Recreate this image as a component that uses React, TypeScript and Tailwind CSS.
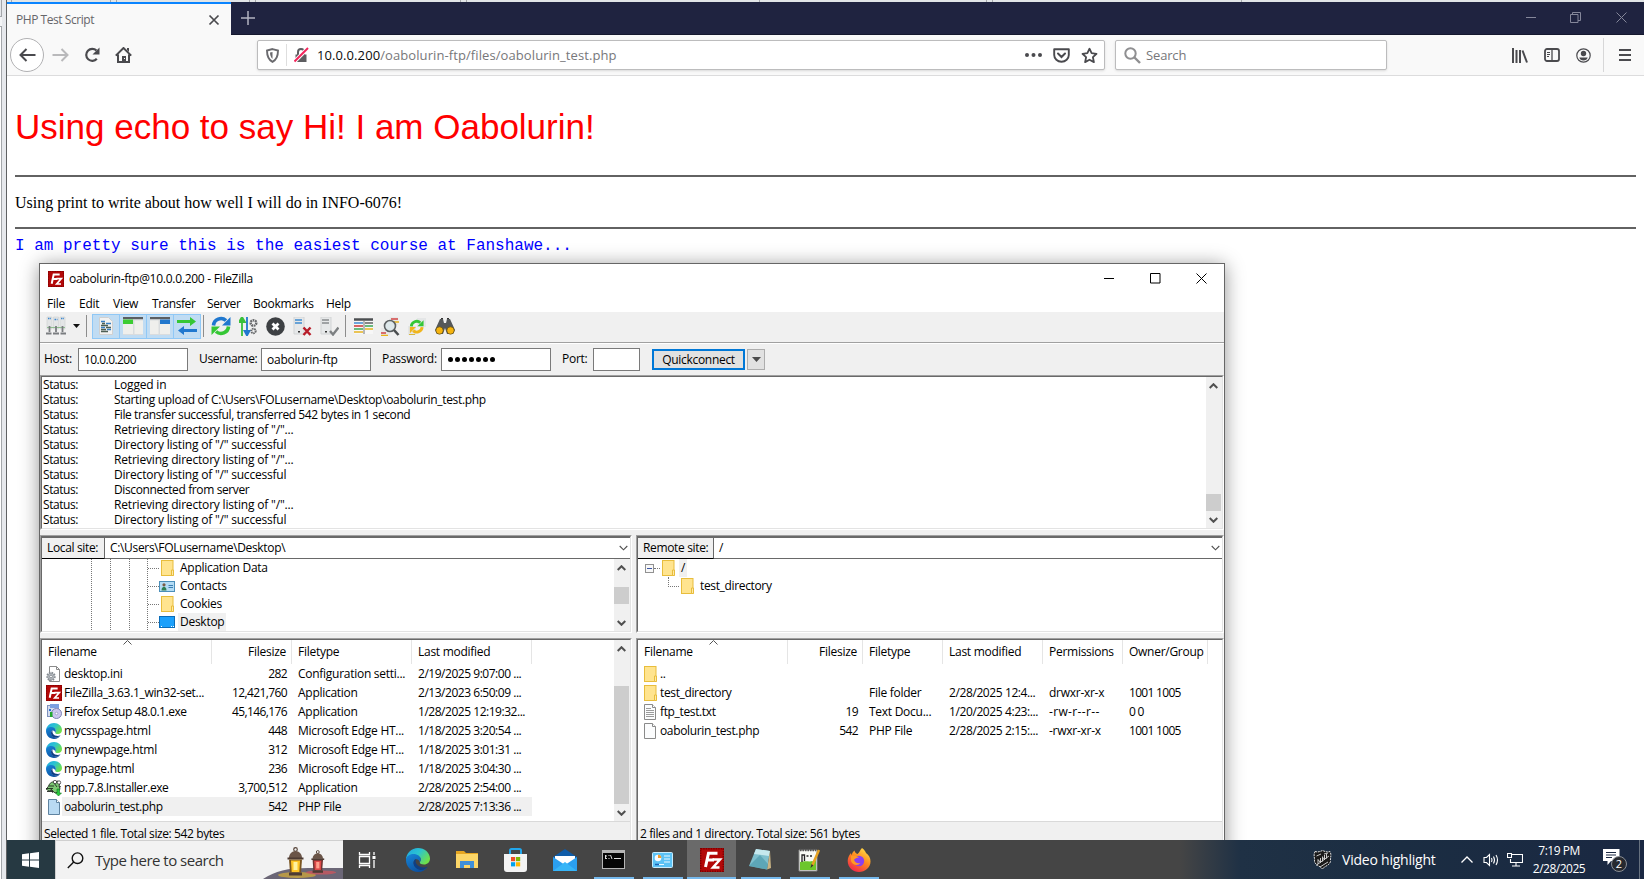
import React from "react";

type P = { children?: React.ReactNode; className?: string };

/* ---------- small shared icons ---------- */
const Folder = () => (
  <svg width="13" height="16" viewBox="0 0 13 16" className="shrink-0">
    <rect x="0.5" y="0.5" width="11.5" height="15" fill="#ffe48f" stroke="#e8bd3c" />
    <path d="M10.500 15.500v-5.500h2v5.500z" fill="#ffe9a6" stroke="#e8bd3c" />
  </svg>
);
const Doc = ({ fill = "#fbfcfd", stroke = "#8a8a8a", lines = false }: { fill?: string; stroke?: string; lines?: boolean }) => (
  <svg width="13" height="16" viewBox="0 0 13 16" className="shrink-0">
    <path d="M.5.5h8l3 3v12H.5z" fill={fill} stroke={stroke} />
    <path d="M8.500.5v3h3" fill="#fff" stroke={stroke} />
    {lines && <path d="M2 4.500h5M2 6.500h8M2 8.500h8M2 10.500h8M2 12.500h8" stroke="#9b9b9b" />}
  </svg>
);
const Fz = ({ s = 16 }: { s?: number }) => (
  <svg width={s} height={s} viewBox="0 0 24 24" className="shrink-0">
    <rect width="24" height="24" fill="#b30808" />
    <rect x=".7" y=".7" width="22.600" height="22.600" fill="none" stroke="#7d0000" strokeWidth="1.400" strokeDasharray="1.500 1" />
    <path d="M5.500 19 8.500 5.200h9M7 12h7" fill="none" stroke="#fff" strokeWidth="3" />
    <path d="M12.500 11.500h7.500l-7 8h6.500" fill="none" stroke="#fff" strokeWidth="2.500" />
  </svg>
);
const Edge = ({ s = 16 }: { s?: number }) => (
  <svg width={s} height={s} viewBox="0 0 24 24" className="shrink-0">
    <defs>
      <linearGradient id="eg1" x1="0" y1="0" x2="1" y2=".6">
        <stop offset="0" stopColor="#1fa4e0" />
        <stop offset=".5" stopColor="#2bc3d2" />
        <stop offset="1" stopColor="#6fe04a" />
      </linearGradient>
      <linearGradient id="eg2" x1="0" y1="0" x2=".6" y2="1">
        <stop offset="0" stopColor="#1787d8" />
        <stop offset="1" stopColor="#0c4f9f" />
      </linearGradient>
    </defs>
    <path d="M0 12C0 5 5.500 0 12 0s12 4.800 12 10.500c0 3.800-2.700 6-6 6-2.600 0-4.200-1-4.200-2 0-.8 1-1.200 1-3 0-2-2-3.500-4.800-3.500C5 8 0 10 0 12z" fill="url(#eg1)" />
    <path d="M0 12c0-3.500 3.500-6 7.500-6 4 0 7.300 2.400 7.300 5.500 0 1.800-1 2.200-1 3 0-2-2.500-4.200-4.800-3C6 13.500 8 20 13.500 21.500c3.500 1 7-1 8.500-3C20 22 16.300 24 12 24 5.300 24 0 18.600 0 12z" fill="url(#eg2)" />
    <path d="M9 11.500c-3.200 3.200-1 9 4.500 10.300 3.500.8 6.800-1.300 8.200-3.300-4 2-9.200.5-11.200-2.500-1.300-2-1-3.700-.2-4.600z" fill="#0f3f84" />
  </svg>
);
const Contact = () => (
  <svg width="16" height="11" viewBox="0 0 16 11" className="shrink-0">
    <rect x=".5" y=".5" width="15" height="10" fill="#b4dcf5" stroke="#4b8fba" />
    <circle cx="5" cy="3.800" r="1.600" fill="#7a5a45" />
    <path d="M2.500 9.500c0-5 5-5 5 0z" fill="#2f7f55" />
    <path d="M9.500 4.500h4.500M9.500 6.500h4.500" stroke="#3c7fb3" />
  </svg>
);
const DesktopI = () => (
  <svg width="16" height="12" viewBox="0 0 16 12" className="shrink-0">
    <rect x=".5" y=".5" width="15" height="11" fill="#1ba0fb" stroke="#0a6cb8" />
    <path d="M2 10.500h1M12 10.500h1M14 10.500h1" stroke="#fff" />
  </svg>
);
const Gear = () => (
  <svg width="16" height="16" viewBox="0 0 16 16" className="shrink-0">
    <path d="M3.500.5h7l3 3v12h-10z" fill="#fff" stroke="#8a8a8a" />
    <path d="M10.500.5v3h3" fill="none" stroke="#8a8a8a" />
    <circle cx="5" cy="10.500" r="3.700" fill="#b8bdc2" stroke="#858b91" strokeWidth="2" strokeDasharray="1.500 1" />
    <circle cx="5" cy="10.500" r="1.400" fill="#fff" stroke="#858b91" />
  </svg>
);
const Setup = () => (
  <svg width="16" height="16" viewBox="0 0 16 16" className="shrink-0">
    <rect x="1.500" y="1.500" width="11" height="11" fill="#d4dced" stroke="#7e91bd" />
    <rect x="4" y="0" width="9" height="4" fill="#7b9fe0" />
    <circle cx="10.500" cy="9.500" r="5" fill="#cbc6ee" stroke="#7d84b5" />
    <circle cx="10.500" cy="9.500" r="1.300" fill="#fff" stroke="#7d84b5" strokeWidth=".6" />
    <path d="M3 5h2v2H3z" fill="#2a6fd2" />
    <rect x="4" y="8" width="2.500" height="5" fill="#25a832" />
  </svg>
);
const Npp = () => (
  <svg width="16" height="16" viewBox="0 0 16 16" className="shrink-0">
    <path d="M3 5c1.500-3 4-3.500 6-3l3-1 2 2-1 3 1 3-2 3-3 1-3-3-3 1-3-2 2-2z" fill="#7cc873" stroke="#2d3a2b" strokeWidth=".9" />
    <path d="M0 8.500h7M1 11.500h6M8 3l3 4M3 6h5M5 9l2 4M13 6l2 1" stroke="#202720" strokeWidth=".9" />
    <circle cx="9" cy="2" r="1.700" fill="#fff" stroke="#222" strokeWidth=".7" />
    <circle cx="13" cy="2.500" r="1.700" fill="#fff" stroke="#222" strokeWidth=".7" />
    <path d="M11 9h2.500v4h2l-3 3-3-3H11z" fill="#25c93c" stroke="#167522" strokeWidth=".6" />
  </svg>
);
const Chev = ({ d = "down", thin = false }: { d?: "up" | "down"; thin?: boolean }) => (
  <svg width="9" height="6" viewBox="0 0 9 6" className="shrink-0">
    <path d={d === "up" ? "M.7 5l3.800-3.800L8.300 5" : "M.7 1l3.800 3.800L8.300 1"} fill="none" stroke="#505050" strokeWidth={thin ? 1.100 : 2} />
  </svg>
);

/* ---------- browser ---------- */
const fx = "#4a4a4e";
const TabBar = () => (
  <div className="flex h-[33px] shrink-0 border-b border-[#15182e] bg-[#1f2340]">
    <div className="flex h-[33px] w-[224px] shrink-0 items-center justify-between border-t-2 border-[#0a84ff] bg-[#f9f9f9] pr-[11px] pl-[9px]">
      <span className="text-[12px] tracking-[-0.45px] text-[#66666a]">PHP Test Script</span>
      <svg width="12" height="12" viewBox="0 0 12 12" className="mt-[1px]"><path d="M1.500 1.500l9 9M10.500 1.500l-9 9" stroke={fx} strokeWidth="1.700" /></svg>
    </div>
    <svg width="14" height="14" viewBox="0 0 14 14" className="mt-[9px] ml-[10px]"><path d="M7 0v14M0 7h14" stroke="#b3b4c0" strokeWidth="1.500" /></svg>
    <div className="ml-auto flex items-start gap-[33px] pt-[10px] pr-[17px]">
      <svg width="11" height="11" viewBox="0 0 11 11"><path d="M0 5.500h10" stroke="#85879a" /></svg>
      <svg width="12" height="11" viewBox="0 0 12 11"><path d="M.5 2.500h7.500v8H.5zM2.500 2.500v-2h8v8H8" fill="none" stroke="#85879a" /></svg>
      <svg width="11" height="11" viewBox="0 0 11 11" className="ml-px"><path d="M.5.5l10 10M10.500.5l-10 10" stroke="#85879a" /></svg>
    </div>
  </div>
);

const NavBar = () => (
  <div className="flex h-[41px] shrink-0 items-center border-b border-[#dcdcdd] bg-[#f9f9f9] pl-[3px]">
    <div className="flex h-[34px] w-[34px] items-center justify-center rounded-full border border-[#b1b1b3] bg-white">
      <svg width="17" height="14" viewBox="0 0 17 14"><path d="M16.500 7H1.500M7.500 1L1.500 7l6 6" fill="none" stroke={fx} strokeWidth="2" /></svg>
    </div>
    <svg width="17" height="14" viewBox="0 0 17 14" className="ml-[8px]"><path d="M.5 7h15M9.500 1l6 6-6 6" fill="none" stroke="#b9b9bb" strokeWidth="2" /></svg>
    <svg width="17" height="16" viewBox="0 0 17 16" className="ml-[15px]">
      <path d="M12.800 11.700A6 6 0 1 1 12.500 3.600" fill="none" stroke={fx} strokeWidth="2.200" />
      <path d="M15.500.5v7h-7z" fill={fx} />
    </svg>
    <svg width="17" height="17" viewBox="0 0 17 17" className="ml-[14px]">
      <path d="M.8 8.600L8.500 1l7.700 7.600M3 7.500V15h11V7.500" fill="none" stroke={fx} strokeWidth="2" />
      <path d="M7 14V9h4v5z" fill={fx} /><path d="M12 1h2v4l-2-2z" fill={fx} /><path d="M9 11h1v1H9z" fill="#fff" />
    </svg>
    <div className="ml-[125px] flex h-[30px] w-[848px] items-center rounded-[2px] border border-[#bcbcbd] bg-white pl-[8px] shadow-sm">
      <svg width="13" height="15" viewBox="0 0 13 15"><path d="M6.500 1.100L12 2.500c0 5-1 9-5.500 11.400C2 11.500 1 7.500 1 2.500z" fill="none" stroke="#6a6a6e" strokeWidth="1.900" /><path d="M6.500 4v7C4.500 9 4 7 4 4.600z" fill="#6a6a6e" /></svg>
      <div className="mr-[7px] ml-[7px] h-[22px] w-px bg-[#dedede]" />
      <svg width="15" height="16" viewBox="0 0 15 16"><path d="M1.500 7.500h11V15h-11z" fill="#5d5d60" /><path d="M4 8V5a3 3 0 0 1 6 0v3" fill="none" stroke="#5d5d60" strokeWidth="2" /><path d="M.5 14.500L14 1" stroke="#fff" strokeWidth="4" /><path d="M.5 14.500L14 1" stroke="#f2255c" strokeWidth="2" /></svg>
      <span className="ml-[8px] pt-[2px] text-[13px] tracking-[0.09px] text-[#77777a]"><span className="text-[#0c0c0d]">10.0.0.200</span>/oabolurin-ftp/files/oabolurin_test.php</span>
      <div className="ml-auto flex items-center gap-[11px] pr-[6px]">
        <svg width="17" height="4" viewBox="0 0 17 4"><circle cx="2" cy="2" r="2" fill={fx} /><circle cx="8.500" cy="2" r="2" fill={fx} /><circle cx="15" cy="2" r="2" fill={fx} /></svg>
        <svg width="17" height="15" viewBox="0 0 17 15"><path d="M1.200 1.200h14.600V7a7.300 6.800 0 0 1-14.600 0z" fill="none" stroke={fx} strokeWidth="1.900" strokeLinejoin="round" /><path d="M5 5.500L8.500 9 12 5.500" fill="none" stroke={fx} strokeWidth="2" strokeLinecap="round" /></svg>
        <svg width="17" height="17" viewBox="0 0 17 17"><path d="M8.500 1.700l2.100 4.500 4.900.6-3.600 3.400 1 4.900-4.400-2.400-4.400 2.400 1-4.900L1.500 6.800l4.900-.6z" fill="none" stroke={fx} strokeWidth="1.800" strokeLinejoin="round" /></svg>
      </div>
    </div>
    <div className="ml-[10px] flex h-[30px] w-[272px] items-center rounded-[2px] border border-[#bcbcbd] bg-white pl-[8px] shadow-sm">
      <svg width="17" height="17" viewBox="0 0 17 17"><circle cx="6.500" cy="6.500" r="5.200" fill="none" stroke="#8f8f91" strokeWidth="2" /><path d="M10.500 10.500l5.500 5.500" stroke="#8f8f91" strokeWidth="2.400" /></svg>
      <span className="ml-[5px] pt-[2px] text-[13px] tracking-[-0.15px] text-[#77777a]">Search</span>
    </div>
    <div className="ml-auto flex items-center pr-[13px]">
      <svg width="16" height="15" viewBox="0 0 16 15"><path d="M1 0v15M4.500 2v13M8 2v13M10.500 2.500L15 14.500" stroke={fx} strokeWidth="2" /></svg>
      <svg width="16" height="14" viewBox="0 0 16 14" className="ml-[16px]"><rect x="1" y="1" width="14" height="12" rx="2" fill="none" stroke={fx} strokeWidth="1.800" /><path d="M8 1v12" stroke={fx} strokeWidth="1.300" /><path d="M3 4.500h3M3 6.500h3M3 8.500h2" stroke={fx} /></svg>
      <svg width="15" height="15" viewBox="0 0 15 15" className="ml-[16px]"><circle cx="7.500" cy="7.500" r="6.700" fill="none" stroke={fx} strokeWidth="1.200" /><circle cx="7.500" cy="5.500" r="2.700" fill={fx} /><path d="M3.300 9.500h8.400c-.5 2-2 3-4.200 3s-3.700-1-4.200-3z" fill={fx} /></svg>
      <div className="ml-[12px] h-[34px] w-px bg-[#d7d7d8]" />
      <svg width="12" height="12" viewBox="0 0 12 12" className="ml-[15px]"><path d="M0 1h12M0 6h12M0 11h12" stroke={fx} strokeWidth="2" /></svg>
    </div>
  </div>
);

/* ---------- FileZilla ---------- */
const Bar = () => <div className="h-[22px] w-px bg-[#8d8d8d]" />;
const On = ({ children }: P) => (
  <div className="-ml-px flex h-[25px] w-[28px] items-center justify-center border border-[#90c8f6] bg-[#c0dcf3]">{children}</div>
);
const Refresh = ({ s, a, b }: { s: number; a: string; b: string }) => (
  <svg width={s} height={s} viewBox="0 0 20 20">
    <path d="M2.500 9.500A7.500 7.500 0 0 1 15 4.500" fill="none" stroke={a} strokeWidth="3.600" />
    <path d="M19.500 1v8.500H11z" fill={a} />
    <path d="M17.500 10.500A7.500 7.500 0 0 1 5 15.500" fill="none" stroke={b} strokeWidth="3.600" />
    <path d="M.5 19v-8.500H9z" fill={b} />
  </svg>
);

const Toolbar = () => (
  <div className="flex h-[31px] shrink-0 items-center border-b border-[#a0a0a0] bg-[#f0f0f0] pb-[2px] pl-[6px]">
    <svg width="20" height="20" viewBox="0 0 20 20">
      <path d="M1 1h5v12H1zM7.500 1h5v12h-5zM14 1h5v12h-5z" fill="#e3e5e6" stroke="#cdd0d2" strokeWidth=".6" />
      <path d="M2 2.500h3M8.500 3.500h3M15 2.500h3" stroke="#3f88cf" strokeWidth="1.600" strokeDasharray="1.500 .7" />
      <path d="M1 11.500h18" stroke="#8fbf8f" strokeWidth="1" />
      <path d="M3.500 10v6M10 10v6M16.500 10v6M0 17.500h5.500M7 17.500h6M14.500 17.500H20" stroke="#7a7d80" strokeWidth="1.800" />
    </svg>
    <svg width="7" height="4" viewBox="0 0 7 4" className="mr-[6px] ml-[7px]"><path d="M0 0h7L3.500 4z" fill="#111" /></svg>
    <Bar />
    <div className="mr-[2px] ml-[6px] flex">
      <On><svg width="14" height="18" viewBox="0 0 14 18"><path d="M.5.500h9l4 4v13H.5z" fill="#f2f2f2" stroke="#d0d0d0" /><path d="M2 4.500h4M7 6.500h5M2 10.500h4M8 12.500h4" stroke="#397fc2" strokeWidth="1.400" /><path d="M3 6.500h3M2 8.500h7M7 10.500h5M2 14.500h7M2 12.500h5" stroke="#4d5e54" strokeWidth="1.300" /></svg></On>
      <On><svg width="20" height="18" viewBox="0 0 20 18"><path d="M0 0h20v18H0z" fill="#d9dcde" /><path d="M0 1h20" stroke="#5b5e62" strokeWidth="2.400" /><path d="M0 2.500h10V7H0z" fill="#3ccc33" /><path d="M0 7h10v10H0zM11.500 3.500H20V17h-8.500z" fill="#efefec" /></svg></On>
      <On><svg width="20" height="18" viewBox="0 0 20 18"><path d="M0 0h20v18H0z" fill="#d9dcde" /><path d="M0 1h20" stroke="#5b5e62" strokeWidth="2.400" /><path d="M10 2.500h10V7H10z" fill="#2277cc" /><path d="M10 7h10v10H10zM0 3.500h8.500V17H0z" fill="#efefec" /></svg></On>
      <On><svg width="20" height="18" viewBox="0 0 20 18"><path d="M0 3h13V0l6 4.500L13 9V6H0z" fill="#35c735" /><path d="M20 15H7v3l-6-4.500L7 9v3h13z" fill="#2078cf" /></svg></On>
    </div>
    <Bar />
    <div className="ml-[7px] flex items-center gap-[8px]">
      <Refresh s={20} a="#2078cf" b="#35c735" />
      <svg width="19" height="19" viewBox="0 0 19 19"><path d="M3 19V4M0 5h6L3 0z" stroke="#3ac03a" strokeWidth="1.800" fill="#3ac03a" /><path d="M8 0v15M5.500 14h5L8 18.500z" stroke="#2078cf" strokeWidth="1.800" fill="#2078cf" /><circle cx="14.500" cy="6" r="2.800" fill="none" stroke="#67696b" strokeWidth="2.400" strokeDasharray="1.700 .7" /><circle cx="14.500" cy="14" r="2.200" fill="none" stroke="#67696b" strokeWidth="2" strokeDasharray="1.400 .6" /></svg>
      <svg width="19" height="19" viewBox="0 0 19 19"><circle cx="9.500" cy="9.500" r="9.300" fill="#3d4043" /><path d="M6.500 6.500l6 6M12.500 6.500l-6 6" stroke="#fff" strokeWidth="2.800" /></svg>
      <svg width="19" height="19" viewBox="0 0 19 19"><path d="M1 0h10v17H1z" fill="#e6e8e9" stroke="#d2d4d5" /><path d="M2 3h7M2 6h7" stroke="#3f8ad0" strokeWidth="1.500" /><path d="M5 14h2v1.500H5z" fill="#333" /><path d="M10.500 10.500l7 7.500M17.500 10.500l-7 7.500" stroke="#b81d2a" strokeWidth="2.500" /></svg>
      <svg width="19" height="19" viewBox="0 0 19 19"><path d="M1 0h10v17H1z" fill="#e6e8e9" stroke="#d2d4d5" /><path d="M2 3h7M2 6h7" stroke="#888b8d" strokeWidth="1.300" /><path d="M5 14h2v1.500H5z" fill="#333" /><path d="M10 14l3 3.500 5.500-7" fill="none" stroke="#7d8082" strokeWidth="2.400" /></svg>
    </div>
    <div className="ml-[6px]"><Bar /></div>
    <div className="ml-[8px] flex items-center gap-[8px]">
      <svg width="19" height="16" viewBox="0 0 19 16"><path d="M0 0h19v16H0z" fill="#f7f7f7" /><path d="M0 1.500h19" stroke="#4b4e51" strokeWidth="2.500" /><path d="M0 5h9" stroke="#3f8ad0" strokeWidth="1.500" /><path d="M0 8h9" stroke="#cc3333" strokeWidth="1.500" /><path d="M0 11h9M11 8h8" stroke="#3aa655" strokeWidth="1.500" /><path d="M0 14h9M11 11h8" stroke="#e6b422" strokeWidth="1.500" /><path d="M10 2v14" stroke="#777" /><path d="M11 5h8" stroke="#555" strokeWidth="1.400" /></svg>
      <svg width="19" height="19" viewBox="0 0 19 19"><path d="M9 0h8v8H9zM0 11h9v8H0z" fill="#e9e9e9" /><path d="M10 2h7M0 16h5" stroke="#d24545" strokeWidth="1.500" /><path d="M13 5h5M0 18.500h7" stroke="#e8b31a" strokeWidth="1.500" /><circle cx="9" cy="9" r="5.500" fill="#dbe6ea" fillOpacity=".85" stroke="#5c6062" strokeWidth="1.600" /><path d="M13 13l4.500 5" stroke="#4a4d4f" strokeWidth="2.600" /></svg>
      <svg width="19" height="19" viewBox="0 0 19 19"><path d="M9 1h9v9H9zM0 9h8v9H0z" fill="#e4e6e7" /><path d="M1 17.500h6" stroke="#d8b73c" /><g transform="translate(1.500 2.500) scale(.72)"><path d="M2.500 9.500A7.500 7.500 0 0 1 15 4.500" fill="none" stroke="#35c735" strokeWidth="4" /><path d="M19.500 1v8.500H11z" fill="#35c735" /><path d="M17.500 10.500A7.500 7.500 0 0 1 5 15.500" fill="none" stroke="#f0b51c" strokeWidth="4" /><path d="M.5 19v-8.500H9z" fill="#f0b51c" /></g></svg>
      <svg width="20" height="17" viewBox="0 0 20 17"><path d="M5 1h3l1 4h2l1-4h3l5 11-2 4h-6l-2-6-2 6H2l-2-4z" fill="#55585a" /><path d="M6 .5h2M12 .5h2" stroke="#333" /><circle cx="4.500" cy="12.500" r="3.700" fill="#f6b40f" stroke="#5a4a1a" strokeWidth=".7" /><circle cx="15.500" cy="12.500" r="3.700" fill="#f6b40f" stroke="#5a4a1a" strokeWidth=".7" /></svg>
    </div>
  </div>
);

const Box = ({ children, className = "" }: P) => (
  <div className={`flex h-[23px] items-center border border-[#7a7a7a] bg-white pl-[5px] ${className}`}>{children}</div>
);

const Quick = () => (
  <div className="flex h-[32px] shrink-0 items-start border-t border-white bg-[#f0f0f0] pt-[4px] pl-[4px]">
    <div className="flex h-[21px] w-[34px] items-center">Host:</div>
    <Box className="w-[110px]"><span className="pb-px tracking-[-0.55px]">10.0.0.200</span></Box>
    <div className="ml-[11px] flex h-[21px] w-[62px] items-center tracking-[-0.3px]">Username:</div>
    <Box className="w-[110px]"><span className="pb-px tracking-[-0.23px]">oabolurin-ftp</span></Box>
    <div className="ml-[11px] flex h-[21px] w-[59px] items-center">Password:</div>
    <Box className="w-[110px] gap-px">
      {[0, 1, 2, 3, 4, 5, 6].map((i) => <span key={i} className="ml-px h-[5px] w-[5px] rounded-full bg-black" />)}
    </Box>
    <div className="ml-[11px] flex h-[21px] w-[31px] items-center">Port:</div>
    <Box className="w-[47px]" />
    <div className="mt-px ml-[12px] flex h-[21px] w-[93px] items-center justify-center border-2 border-[#0078d7] bg-[#e1e1e1] tracking-[-0.3px]">Quickconnect</div>
    <div className="mt-px ml-[2px] flex h-[21px] w-[18px] items-center justify-center border border-[#adadad] bg-[#e1e1e1]">
      <svg width="9" height="5" viewBox="0 0 9 5"><path d="M0 0h9L4.500 5z" fill="#4a4a4a" /></svg>
    </div>
  </div>
);

const Sunken = ({ children, className = "" }: P) => (
  <div className={`border border-[#a0a0a0] border-r-white border-b-white ${className}`}>
    <div className="flex h-full flex-col overflow-hidden border border-[#696969] border-r-[#e3e3e3] border-b-[#e3e3e3] bg-white">{children}</div>
  </div>
);

const Scroll = ({ before, thumb }: { before: string; thumb: string }) => (
  <div className="-mr-px flex w-[17px] shrink-0 flex-col items-center bg-[#f0f0f0] pr-[2px]">
    <div className="flex h-[17px] items-center"><Chev d="up" /></div>
    <div className={`shrink-0 ${before}`} />
    <div className={`w-full shrink-0 bg-[#cdcdcd] ${thumb}`} />
    <div className="mt-auto flex h-[17px] items-center"><Chev /></div>
  </div>
);

const log: [string, string][] = [
  ["Logged in", "tracking-[-0.2px]"],
  ["Starting upload of C:\\Users\\FOLusername\\Desktop\\oabolurin_test.php", "tracking-[-0.33px]"],
  ["File transfer successful, transferred 542 bytes in 1 second", "tracking-[-0.41px]"],
  ['Retrieving directory listing of "/"...', "tracking-[-0.18px]"],
  ['Directory listing of "/" successful', "tracking-[-0.2px]"],
  ['Retrieving directory listing of "/"...', "tracking-[-0.18px]"],
  ['Directory listing of "/" successful', "tracking-[-0.2px]"],
  ["Disconnected from server", "tracking-[-0.38px]"],
  ['Retrieving directory listing of "/"...', "tracking-[-0.18px]"],
  ['Directory listing of "/" successful', "tracking-[-0.2px]"],
];

const Site = ({ label, path, w }: { label: string; path: string; w: string }) => (
  <div className="flex h-[22px] shrink-0 border-t border-[#696969]">
    <div className={`flex items-center border-r border-b border-black border-r-[#696969] bg-[#f0f0f0] pb-[2px] pl-[5px] tracking-[-0.35px] ${w}`}>{label}</div>
    <div className="flex flex-1 items-center justify-between border-b border-[#696969] pr-[2px] pl-[5px]"><span className="pb-[2px] tracking-[-0.33px]">{path}</span><Chev thin /></div>
  </div>
);

const tree: [string, React.ReactNode][] = [
  ["Application Data", <Folder key="a" />],
  ["Contacts", <Contact key="b" />],
  ["Cookies", <Folder key="c" />],
  ["Desktop", <DesktopI key="d" />],
];

type Cell = React.ReactNode;
const leftCols = ["w-[170px]", "w-[80px]", "w-[120px]", "w-[120px]"];
const rightCols = ["w-[150px]", "w-[75px]", "w-[80px]", "w-[100px]", "w-[80px]", "w-[85px]"];

const Header = ({ cols, names, arrow }: { cols: string[]; names: string[]; arrow: string }) => (
  <div className="relative flex h-[24px] shrink-0">
    <svg width="9" height="5" viewBox="0 0 9 5" className={`absolute top-0 ${arrow}`}><path d="M.5 4.500l4-4 4 4" fill="none" stroke="#555" /></svg>
    {names.map((n, i) => (
      <div key={n} className={`flex shrink-0 items-center border-r border-[#e5e5e5] pb-[2px] pl-[6px] ${i === 1 ? "justify-end pr-[5px]" : ""} ${cols[i]}`}>
        <span>{n}</span>
      </div>
    ))}
  </div>
);

const Row = ({ cols, icon, cells, sel, date, name = "" }: { cols: string[]; icon: Cell; cells: string[]; sel?: boolean; date: string; name?: string }) => (
  <div className="flex h-[19px] shrink-0 items-center">
    {cells.map((c, i) => (
      <div key={i} className={`flex h-full shrink-0 items-center whitespace-nowrap ${cols[i]} ${i === 1 ? "justify-end pr-[5px] tracking-[-0.6px]" : ""} ${i === 3 ? date : ""} ${i === 4 && c.includes("--") ? "tracking-[0.35px]" : ""} ${i === 5 ? "tracking-[-0.7px]" : ""} ${i > 1 ? "pl-[6px]" : ""} ${sel && i > 0 ? "bg-[#f0f0f0]" : ""}`}>
        {i === 0 ? (
          <>
            {icon}
            <div className={`flex h-full flex-1 items-center pl-[2px] ${name} ${sel ? "bg-[#f0f0f0]" : ""}`}>{c}</div>
          </>
        ) : c}
      </div>
    ))}
  </div>
);

const I16 = ({ children }: P) => <div className="ml-[4px] flex w-[16px] shrink-0 justify-center">{children}</div>;
const left: [Cell, string[], string][] = [
  [<Gear />, ["desktop.ini", "282", "Configuration setti...", "2/19/2025 9:07:00 ..."], ""],
  [<Fz />, ["FileZilla_3.63.1_win32-set...", "12,421,760", "Application", "2/13/2023 6:50:09 ..."], "tracking-[-0.32px]"],
  [<Setup />, ["Firefox Setup 48.0.1.exe", "45,146,176", "Application", "1/28/2025 12:19:32..."], "tracking-[-0.46px]"],
  [<Edge />, ["mycsspage.html", "448", "Microsoft Edge HT...", "1/18/2025 3:20:54 ..."], ""],
  [<Edge />, ["mynewpage.html", "312", "Microsoft Edge HT...", "1/18/2025 3:01:31 ..."], ""],
  [<Edge />, ["mypage.html", "236", "Microsoft Edge HT...", "1/18/2025 3:04:30 ..."], ""],
  [<Npp />, ["npp.7.8.Installer.exe", "3,700,512", "Application", "2/28/2025 2:54:00 ..."], "tracking-[-0.42px]"],
  [<Doc fill="#b9daf2" stroke="#5f83a0" />, ["oabolurin_test.php", "542", "PHP File", "2/28/2025 7:13:36 ..."], "tracking-[-0.38px]"],
];
const right: [Cell, string[]][] = [
  [<Folder />, ["..", "", "", "", "", ""]],
  [<Folder />, ["test_directory", "", "File folder", "2/28/2025 12:4...", "drwxr-xr-x", "1001 1005"]],
  [<Doc lines />, ["ftp_test.txt", "19", "Text Docu...", "1/20/2025 4:23:...", "-rw-r--r--", "0 0"]],
  [<Doc />, ["oabolurin_test.php", "542", "PHP File", "2/28/2025 2:15:...", "-rwxr-xr-x", "1001 1005"]],
];

const FileZilla = () => (
  <div className="absolute top-[263px] left-[39px] flex h-[617px] w-[1186px] flex-col border border-[#666] bg-[#f0f0f0] text-[12px] leading-[15px] tracking-[-0.27px] text-black shadow-[0_2px_18px_rgba(0,0,0,0.42)]">
    <div className="flex h-[30px] shrink-0 items-center bg-white pb-px pl-[8px]">
      <Fz />
      <span className="ml-[5px] pb-px">oabolurin-ftp@10.0.0.200 - FileZilla</span>
      <div className="ml-auto flex items-center gap-[35px] pr-[17px] pb-px">
        <svg width="11" height="11" viewBox="0 0 11 11"><path d="M0 5.500h10" stroke="#000" /></svg>
        <svg width="11" height="11" viewBox="0 0 11 11"><path d="M.5.500h9.500v9.500H.5z" fill="none" stroke="#000" /></svg>
        <svg width="11" height="11" viewBox="0 0 11 11"><path d="M.5.500l10 10M10.500.5l-10 10" stroke="#000" /></svg>
      </div>
    </div>
    <div className="flex h-[18px] shrink-0 bg-white pl-[7px] leading-[20px]">
      <span className="w-[32px]">File</span><span className="w-[34px]">Edit</span><span className="w-[39px]">View</span><span className="w-[55px] tracking-[-0.45px]">Transfer</span><span className="w-[46px] tracking-[-0.4px]">Server</span><span className="w-[73px]">Bookmarks</span><span>Help</span>
    </div>
    <Toolbar />
    <Quick />
    <Sunken className="h-[155px] shrink-0">
      <div className="flex h-full">
        <div className="flex-1 pl-px">
          {log.map(([l, t], i) => <div key={i} className="flex"><span className="w-[71px] tracking-[-0.45px]">Status:</span><span className={t}>{l}</span></div>)}
        </div>
        <Scroll before="h-[100px]" thumb="h-[17px]" />
      </div>
    </Sunken>
    <div className="mt-[5px] flex h-[98px] shrink-0 gap-[4px]">
      <Sunken className="w-[592px]">
        <Site label="Local site:" path="C:\Users\FOLusername\Desktop\" w="w-[63px]" />
        <div className="flex flex-1">
          <svg width="106" height="72" viewBox="0 0 106 72" className="shrink-0">
            <path d="M49.500 0v72M68.500 0v72M87.500 0v72M105.500 0v72" stroke="#777" strokeDasharray="1 1" />
          </svg>
          <div className="flex flex-1 flex-col">
            {tree.map(([n, ic]) => (
              <div key={n} className="flex h-[18px] items-center">
                <div className="w-[11px] border-t border-dotted border-[#777]" />
                <div className="flex w-[16px] justify-center">{ic}</div>
                <span className={`ml-[3px] flex h-[18px] items-center px-[2px] pb-px ${n === "Desktop" ? "bg-[#f0f0f0]" : ""}`}>{n}</span>
              </div>
            ))}
          </div>
          <Scroll before="h-[11px]" thumb="h-[17px]" />
        </div>
      </Sunken>
      <Sunken className="flex-1">
        <Site label="Remote site:" path="/" w="w-[76px]" />
        <div className="flex h-[18px] items-center pl-[7px]">
          <svg width="9" height="9" viewBox="0 0 9 9"><rect x=".5" y=".5" width="8" height="8" fill="#f8f8f8" stroke="#919191" /><path d="M2 4.500h5" stroke="#3b55a5" /></svg>
          <div className="mr-[2px] w-[6px] border-t border-dotted border-[#777]" />
          <Folder />
          <span className="ml-[4px] flex h-[18px] items-center bg-[#f0f0f0] px-[2px] pb-px">/</span>
        </div>
        <div className="flex h-[18px] items-start pl-[30px]">
          <div className="mr-[2px] h-[10px] w-[11px] border-b border-l border-dotted border-[#777]" />
          <div className="mt-px"><Folder /></div>
          <span className="ml-[6px] leading-[18px] tracking-[-0.35px]">test_directory</span>
        </div>
      </Sunken>
    </div>
    <div className="mt-[5px] flex min-h-0 flex-1 gap-[4px]">
      <Sunken className="w-[592px]">
        <div className="flex h-[181px] shrink-0">
          <div className="flex-1">
            <Header cols={leftCols} names={["Filename", "Filesize", "Filetype", "Last modified"]} arrow="left-[81px]" />
            {left.map(([ic, c, t]) => <Row key={c[0]} cols={leftCols} icon={<I16>{ic}</I16>} cells={c} sel={c[1] === "542"} date="tracking-[-0.47px]" name={t} />)}
          </div>
          <Scroll before="h-[29px]" thumb="h-[118px]" />
        </div>
        <div className="flex-1 border-t border-[#d9d9d9] bg-[#f0f0f0] pt-[4px] pl-[2px] tracking-[-0.4px]">Selected 1 file. Total size: 542 bytes</div>
      </Sunken>
      <Sunken className="flex-1">
        <div className="h-[181px] shrink-0">
          <Header cols={rightCols} names={["Filename", "Filesize", "Filetype", "Last modified", "Permissions", "Owner/Group"]} arrow="left-[71px]" />
          {right.map(([ic, c]) => <Row key={c[0]} cols={rightCols} icon={<div className="ml-[6px] flex w-[14px] shrink-0">{ic}</div>} cells={c} date="tracking-[-0.4px]" name="tracking-[-0.36px]" />)}
        </div>
        <div className="flex-1 border-t border-[#d9d9d9] bg-[#f0f0f0] pt-[4px] pl-[2px] tracking-[-0.41px]">2 files and 1 directory. Total size: 561 bytes</div>
      </Sunken>
    </div>
  </div>
);

/* ---------- taskbar ---------- */
const Slot = ({ children, run, active }: P & { run?: boolean; active?: boolean }) => (
  <div className={`relative flex h-[39px] w-[49px] shrink-0 items-center justify-center ${active ? "bg-[#6a6a6a]" : ""}`}>
    {children}
    {run && <div className={`absolute bottom-0 h-[2px] bg-[#76b9ed] ${active ? "w-full" : "w-[40px]"}`} />}
  </div>
);

const Lantern = ({ c, g, k, s }: { c: string; g: string; k: string; s: number }) => (
  <svg width={17 * s} height={30 * s} viewBox="0 0 17 30">
    <circle cx="8.500" cy="2.500" r="1.800" fill="none" stroke="#59473c" strokeWidth="1.200" />
    <path d="M2 11c0-4 3-7 6.500-7s6.500 3 6.500 7z" fill="#6b5548" />
    <path d="M.5 10.500h16v2H.5z" fill="#4d3b33" />
    <path d="M2 12.500h13l-1 13H3z" fill={k} />
    <path d="M4 13.500h9l-.7 11.500H4.700z" fill={c} />
    <path d="M6.500 15h4v8h-4z" fill={g} />
    <path d="M2 25.500h13v3H2z" fill="#4d3b33" />
  </svg>
);

const Taskbar = () => (
  <div className="relative flex h-[39px] shrink-0 items-center bg-[linear-gradient(90deg,#454545_0,#454545_1173px,#1f3145_1233px,#1b2d42_1393px,#1a2842_1637px)] text-white">
    <div className="flex h-full w-[48px] items-center justify-center bg-[#263942]">
      <svg width="17" height="16" viewBox="0 0 17 16" className="mr-px"><path d="M0 2.300l7-1V7.500H0zM8 1.200L17 0v7.500H8zM0 8.500h7v6.200l-7-1zM8 8.500h9V16l-9-1.200z" fill="#fff" /></svg>
    </div>
    <div className="flex h-full w-[288px] items-center border-t border-l border-[#cfcfcf] bg-[#f2f2f2] pl-[11px]">
      <svg width="17" height="17" viewBox="0 0 17 17"><circle cx="10.500" cy="6.200" r="5.300" fill="none" stroke="#111" strokeWidth="1.400" /><path d="M6.700 10L.8 16" stroke="#111" strokeWidth="1.400" /></svg>
      <span className="ml-[11px] text-[15px] tracking-[-0.5px] text-[#333]">Type here to search</span>
      <div className="relative ml-auto flex h-full w-[80px] items-end justify-end gap-[7px] pr-[18px] pb-[2px]">
        <svg width="80" height="11" viewBox="0 0 80 11" className="absolute bottom-0 left-0">
          <path d="M0 11C12 3 25 0 45 0h35v11z" fill="#6b6676" /><ellipse cx="34" cy="7" rx="19" ry="3" fill="#c9a53f" opacity=".8" /><ellipse cx="58" cy="4.500" rx="15" ry="2" fill="#c8565f" opacity=".8" />
        </svg>
        <div className="relative"><Lantern s={1} c="#ffc526" g="#fff2a0" k="#7a5520" /></div>
        <div className="relative mb-[3px]"><Lantern s={0.8} c="#dc4848" g="#ff9e8c" k="#6d3230" /></div>
      </div>
    </div>
    <Slot><svg width="18" height="16" viewBox="0 0 18 16" className="mr-[2px]"><path d="M1.500 4.500h10v7h-10zM1.500 0v2.500h10V0M1.500 16v-2.500h10V16M16 0v3M16 8v8" fill="none" stroke="#fff" strokeWidth="1.300" /><path d="M14.500 4h3v3h-3z" fill="#fff" /></svg></Slot>
    <div className="w-px" />
    <Slot><Edge s={24} /></Slot>
    <Slot><svg width="22" height="19" viewBox="0 0 22 19"><path d="M0 1h8l2 2h12v15H0z" fill="#e6a622" /><path d="M0 4h22v14H0z" fill="#fcd668" /><path d="M4 18v-7h14v7h-4v-3H8v3z" fill="#3f8fd8" /></svg></Slot>
    <Slot><svg width="23" height="24" viewBox="0 0 23 24"><path d="M6 6V2.500A1.500 1.500 0 0 1 7.500 1h8A1.500 1.500 0 0 1 17 2.500V6" fill="none" stroke="#22a7ec" strokeWidth="2" /><path d="M0 6h23v15a3 3 0 0 1-3 3H3a3 3 0 0 1-3-3z" fill="#f3f3f3" /><path d="M7 9h4.200v4.200H7z" fill="#f04e23" /><path d="M12 9h4.200v4.200H12z" fill="#7db700" /><path d="M7 14.200h4.200v4.200H7z" fill="#00a2ed" /><path d="M12 14.200h4.200v4.200H12z" fill="#ffb700" /></svg></Slot>
    <Slot><svg width="24" height="22" viewBox="0 0 24 22"><path d="M0 8l12-8 12 8v4H0z" fill="#0f5ca8" /><path d="M2 7h20v8H2z" fill="#fff" /><path d="M0 8l12 8 12-8v14H0z" fill="#2b9ff0" /><path d="M0 22l12-9 12 9z" fill="#37b5f7" /></svg></Slot>
    <Slot run><svg width="23" height="19" viewBox="0 0 23 19"><path d="M0 0h23v19H0z" fill="#b5b5b5" /><path d="M1 3h21v15H1z" fill="#050505" /><path d="M3 6h2M3 8.500h2M3.500 5v4M7 5v1M7 8v1M8.500 5l1.500 4M12 8.500h7" stroke="#ddd" strokeWidth="1" /></svg></Slot>
    <Slot run><svg width="21" height="16" viewBox="0 0 21 16"><rect x=".5" y=".5" width="20" height="15" rx="1" fill="#5bc2f5" stroke="#c8ecfd" /><circle cx="6" cy="6" r="3.300" fill="#f7faff" /><path d="M6 6V2.700A3.300 3.300 0 0 1 9.300 6z" fill="#f59d28" /><path d="M12 4h6M12 7h6M12 10h6M3 12.500h9" stroke="#eaf8ff" strokeWidth="1.200" /><path d="M3 12.500h4" stroke="#1d63b4" strokeWidth="1.500" /></svg></Slot>
    <Slot run active><Fz s={24} /></Slot>
    <Slot run><svg width="22" height="22" viewBox="0 0 22 22" className="mr-[2px]"><path d="M7 0l14 2-3 18.500L0 17z" fill="#7fc0ce" /><path d="M7 0l14 2-1 5L5 5z" fill="#c5e8ee" /><path d="M18 20.500L21 2l1 17z" fill="#c9b384" /><path d="M0 17L11 6l8 9-1 5.500z" fill="#4f9bae" opacity=".7" /></svg></Slot>
    <Slot run><svg width="22" height="24" viewBox="0 0 22 24" className="mr-px"><path d="M1 2h18v21H1z" fill="#f8faf5" stroke="#888" /><path d="M2 14c6-2 10 1 16-2v10H2z" fill="#6cc62c" /><path d="M2 2h16" stroke="#555" strokeWidth="2.400" strokeDasharray="1.500 1" /><path d="M4 14V7h2.500v6M8.500 8h2M12 8h2" fill="none" stroke="#222" strokeWidth="1.300" /><path d="M21 2l-7 16" stroke="#e8a321" strokeWidth="2.500" /><path d="M13.500 16l-1 4 3-2.500z" fill="#333" /></svg></Slot>
    <Slot run><svg width="24" height="24" viewBox="0 0 24 24">
      <defs><linearGradient id="ff" x1=".8" y1="0" x2=".2" y2="1"><stop offset="0" stopColor="#ffe14a" /><stop offset=".45" stopColor="#ff8a1e" /><stop offset="1" stopColor="#f0204f" /></linearGradient></defs>
      <path d="M15 0c3 2 3.500 4 4 5 3 2 4.500 5 4.500 8.500C23.500 19.500 18 24 12 24S.7 19.500.7 13c0-3 1.300-6 3.300-8 0 1 .3 1.700.8 2C5 5.500 6 3.500 7.500 2.500c.3 2 1.500 3 3 3.500C12.500 4.500 13 2 15 0z" fill="url(#ff)" />
      <circle cx="12" cy="13" r="5.200" fill="#8a3ff0" /><path d="M4 8c3-1.500 6 0 8 1.500-3 0-3.500 1.500-5 2 .5 3 3.500 4.500 6.500 3.500-2 3-8 2.500-9.500-2z" fill="#ff9a24" />
    </svg></Slot>
    <div className="ml-auto flex h-full items-center">
      <svg width="19" height="20" viewBox="0 0 19 20"><path d="M2 1.500c3 1 5 0 7.500-1 2.500 1 4.500 2 7.500 1 2 4 0 6 .5 10-1 4-6 4.500-8 7.500-2-3-7-3.500-8-7.500C2 7.500 0 5.500 2 1.500z" fill="#1a1a1a" stroke="#ddd" strokeWidth="1" strokeDasharray="2 .8" /><path d="M3.500 6l4.500-2M11 4l4-1M3 15.500L16 6M5 14V9.500l2.500 3V8M9.500 11.500V6.500M9.500 9l2-1.500M11.500 10V5M13.500 4v4.500M7 17l8-5" fill="none" stroke="#ddd" strokeWidth=".9" /></svg>
      <span className="ml-[10px] w-[97px] text-[14px] tracking-[-0.22px] whitespace-nowrap">Video highlight</span>
      <svg width="12" height="7" viewBox="0 0 12 7" className="ml-[22px]"><path d="M.5 6.500L6 1l5.500 5.500" fill="none" stroke="#fff" strokeWidth="1.300" /></svg>
      <svg width="17" height="14" viewBox="0 0 17 14" className="ml-[10px]"><path d="M1 4.500h2.500l3-3v11l-3-3H1zM8.500 5q1 2 0 4M10.500 3.500q2 3.500 0 7M13 2q3 5 0 10" fill="none" stroke="#fff" strokeWidth="1.100" /></svg>
      <svg width="16" height="14" viewBox="0 0 16 14" className="ml-[7px]"><path d="M4.500 1.500h11v8h-12V6M.5.5h4v4h-4zM9 9.500v3M5 13h8" fill="none" stroke="#fff" strokeWidth="1.100" /></svg>
      <div className="ml-[8px] w-[56px] text-center text-[12px] leading-[18px] tracking-[-0.5px] whitespace-nowrap"><div>7:19 PM</div><div>2/28/2025</div></div>
      <div className="relative ml-[16px] h-[26px] w-[26px]">
        <svg width="17" height="16" viewBox="0 0 17 16" className="absolute top-[2px] left-0"><path d="M0 0h16.500v12H8l-3.500 4v-4H0z" fill="#fff" /><path d="M3 3.500h10M3 6h10M3 8.500h6" stroke="#1a2842" /></svg>
        <div className="absolute top-[9px] left-[8px] flex h-[16px] w-[16px] items-center justify-center rounded-full border border-[#8b8f96] bg-[#26292f] text-[11px] leading-none">2</div>
      </div>
      <div className="mr-[4px] ml-[10px] h-full w-px bg-[#66717f]" />
    </div>
  </div>
);

const Strip = () => (
  <div className="flex h-[2px] shrink-0 bg-[#e1e5e7]">
    <div className="w-[5px] border-r border-[#a5a8ab]" />
    <div className="w-[99px] border-r border-[#a5a8ab]" />
    <div className="w-[6px] border-r border-[#a5a8ab]" />
    <div className="w-[133px] border-r border-[#a5a8ab]" />
    <div className="w-[6px] border-r border-[#a5a8ab]" />
    <div className="w-[205px] border-r border-[#a5a8ab]" />
    <div className="w-[6px] border-r border-[#a5a8ab]" />
    <div className="w-[293px] border-r border-[#a5a8ab]" />
    <div className="w-[227px] border-r border-[#a5a8ab]" />
    <div className="w-[6px] border-r border-[#a5a8ab]" />
    <div className="w-[249px] border-r border-[#a5a8ab]" />
  </div>
);

export default function App() {
  return (
    <div className="relative flex h-[879px] w-[1644px] overflow-hidden bg-white font-['Open_Sans','Noto_Sans',sans-serif]">
      <div className="flex w-[7px] shrink-0 border-r border-[#5f6163] bg-[#e6e8ec]">
        <div className="flex w-[2px] flex-col">
          <div className="h-[17px] border-r border-b border-[#a3a6aa] bg-[#e6e8ec]" />
          <div className="h-[9px] bg-[#f3f4f6]" />
          <div className="flex-1 border-t border-r border-[#a3a6aa] bg-white" />
        </div>
      </div>
      <div className="flex min-w-0 flex-1 flex-col bg-white">
        <Strip />
        <TabBar />
        <NavBar />
        <div className="min-h-0 flex-1 px-[8px]">
          <h1 className="pt-[29px] font-['Liberation_Sans',sans-serif] text-[35px] leading-[44px] text-[#ff0000]">Using echo to say Hi! I am Oabolurin!</h1>
          <div className="mt-[26px] h-[2px] bg-[#626262]" />
          <p className="mt-[16px] font-['Liberation_Serif',serif] text-[16px] leading-[20px] text-black">Using print to write about how well I will do in INFO-6076!</p>
          <div className="mt-[14px] h-[2px] bg-[#626262]" />
          <p className="mt-[7px] font-['Liberation_Mono',monospace] text-[16px] leading-[20px] text-[#0000ff]">I am pretty sure this is the easiest course at Fanshawe...</p>
        </div>
        <FileZilla />
        <div className="relative flex shrink-0 flex-col"><Taskbar /></div>
      </div>
    </div>
  );
}
